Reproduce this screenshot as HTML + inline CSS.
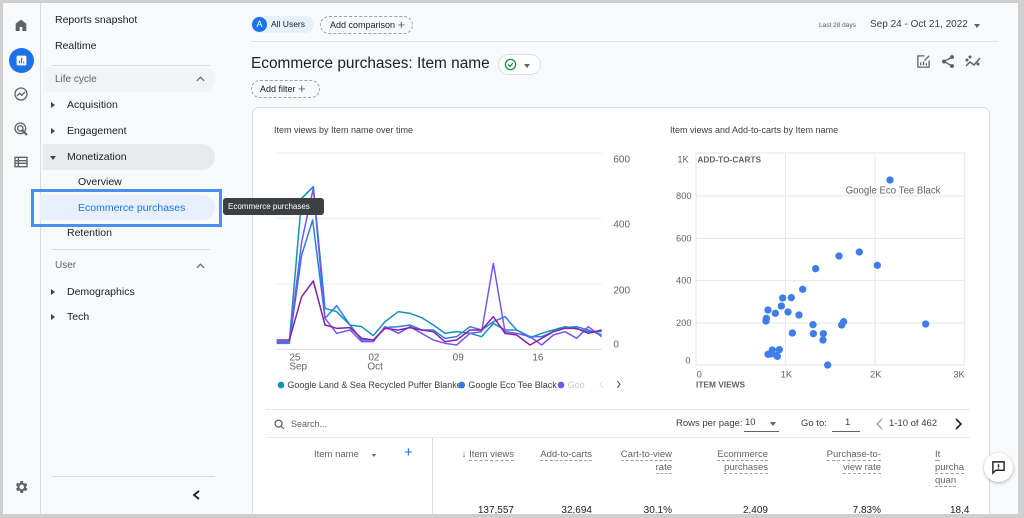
<!DOCTYPE html>
<html><head><meta charset="utf-8"><style>
*{box-sizing:border-box;margin:0;padding:0}
body{width:1024px;height:518px;overflow:hidden;background:#cfcfcf;font-family:"Liberation Sans",sans-serif;color:#202124;position:relative}
.abs{position:absolute}
#frame{position:absolute;left:3px;top:3px;width:1015px;height:511px;background:#f8f9fa;overflow:hidden}
.t{position:absolute;white-space:nowrap}
.nav{font-size:10.5px;color:#202124}
.sec{font-size:10px;color:#5f6368}
.tri{position:absolute;width:0;height:0;border-top:3px solid transparent;border-bottom:3px solid transparent;border-left:4px solid #444}
.pill{position:absolute;border:1px dashed #9aa0a6;border-radius:12px;font-size:9px;color:#202124;background:#f8f9fa}
.hd{position:absolute;font-size:9.5px;color:#5f6368;text-align:right;line-height:13px}
.hd span{border-bottom:1px dashed #9aa0a6}
.v{position:absolute;font-size:10px;color:#202124;text-align:right}
</style></head><body>
<div id="frame">
<div class="abs" style="left:37px;top:0;width:1px;height:511px;background:#dadce0"></div>
<svg class="abs" style="left:10px;top:14px" width="16" height="16" viewBox="0 0 24 24"><path d="M4 21V10l8-6 8 6v11h-6v-6h-4v6z" fill="#5f6368"/></svg>
<div class="abs" style="left:6px;top:45px;width:25px;height:25px;border-radius:50%;background:#1a73e8"></div>
<svg class="abs" style="left:12px;top:51px" width="13" height="13" viewBox="0 0 24 24"><rect x="3" y="3" width="18" height="18" rx="2" fill="#fff"/><path d="M8 17v-5M12 17V7M16 17v-3" stroke="#1a73e8" stroke-width="2.2"/></svg>
<svg class="abs" style="left:10px;top:83px" width="16" height="16" viewBox="0 0 24 24" fill="none" stroke="#5f6368" stroke-width="2"><circle cx="12" cy="12" r="9"/><path d="M6 15l4-4 3 3 5-5"/></svg>
<svg class="abs" style="left:10px;top:118px" width="16" height="16" viewBox="0 0 24 24" fill="none" stroke="#5f6368" stroke-width="2"><circle cx="11" cy="11" r="8"/><circle cx="11" cy="11" r="4"/><path d="M13 13l8 8" stroke-width="3"/></svg>
<svg class="abs" style="left:10px;top:151px" width="16" height="16" viewBox="0 0 24 24"><path d="M3 5h18v14H3z" fill="none" stroke="#5f6368" stroke-width="2"/><path d="M3 10h18M3 14h18M8 5v14" stroke="#5f6368" stroke-width="2"/></svg>
<svg class="abs" style="left:10px;top:476px" width="16" height="16" viewBox="0 0 24 24" fill="#5f6368"><path d="M19.4 13a7.5 7.5 0 000-2l2.1-1.6-2-3.5-2.5 1a7 7 0 00-1.7-1L15 3h-4l-.4 2.8a7 7 0 00-1.7 1l-2.5-1-2 3.5L6.6 11a7.5 7.5 0 000 2l-2.1 1.6 2 3.5 2.5-1a7 7 0 001.7 1L11 21h4l.4-2.8a7 7 0 001.7-1l2.5 1 2-3.5zM13 15.5a3.5 3.5 0 110-7 3.5 3.5 0 010 7z"/></svg>
<div class="t nav" style="left:52px;top:11px">Reports snapshot</div>
<div class="t nav" style="left:52px;top:37px">Realtime</div>
<div class="abs" style="left:49px;top:62px;width:158px;height:1px;background:#dadce0"></div>
<div class="abs" style="left:40px;top:64px;width:172px;height:25px;background:#f1f3f4;border-radius:0 13px 13px 0"></div>
<div class="t sec" style="left:52px;top:71px">Life cycle</div>
<svg class="abs" style="left:193px;top:73px" width="9" height="6" viewBox="0 0 10 6"><path d="M1 5l4-4 4 4" stroke="#5f6368" fill="none" stroke-width="1.3"/></svg>
<div class="tri" style="left:48px;top:99px"></div><div class="t nav" style="left:64px;top:96px">Acquisition</div>
<div class="tri" style="left:48px;top:125px"></div><div class="t nav" style="left:64px;top:122px">Engagement</div>
<div class="abs" style="left:40px;top:141px;width:172px;height:26px;background:#e8eaed;border-radius:0 13px 13px 0"></div>
<div class="abs" style="left:47px;top:153px;width:0;height:0;border-left:3px solid transparent;border-right:3px solid transparent;border-top:4px solid #444"></div>
<div class="t nav" style="left:64px;top:148px">Monetization</div>
<div class="t nav" style="left:75px;top:173px">Overview</div>
<div class="abs" style="left:28px;top:186px;width:191px;height:38px;border:3px solid #4a90f0"></div>
<div class="abs" style="left:37px;top:192px;width:175px;height:25px;background:#e8f0fe;border-radius:0 13px 13px 0"></div>
<div class="t nav" style="left:75px;top:199px;color:#1a73e8">Ecommerce purchases</div>
<div class="t nav" style="left:64px;top:224px">Retention</div>
<div class="abs" style="left:49px;top:246px;width:158px;height:1px;background:#dadce0"></div>
<div class="t sec" style="left:52px;top:257px">User</div>
<svg class="abs" style="left:193px;top:260px" width="9" height="6" viewBox="0 0 10 6"><path d="M1 5l4-4 4 4" stroke="#5f6368" fill="none" stroke-width="1.3"/></svg>
<div class="tri" style="left:48px;top:286px"></div><div class="t nav" style="left:64px;top:283px">Demographics</div>
<div class="tri" style="left:48px;top:311px"></div><div class="t nav" style="left:64px;top:308px">Tech</div>
<div class="abs" style="left:49px;top:473px;width:163px;height:1px;background:#dadce0"></div>
<svg class="abs" style="left:189px;top:487px" width="9" height="10" viewBox="0 0 9 10"><path d="M7 1L2 5l5 4" stroke="#202124" fill="none" stroke-width="1.8"/></svg>
<div class="abs" style="left:248px;top:13px;width:63px;height:17px;background:#e8f0fe;border-radius:9px"></div>
<div class="abs" style="left:249px;top:14px;width:15px;height:15px;border-radius:50%;background:#1a73e8;color:#fff;font-size:9px;text-align:center;line-height:15px">A</div>
<div class="t" style="left:268px;top:16px;font-size:8.5px">All Users</div>
<div class="pill" style="left:317px;top:13px;width:93px;height:18px;line-height:16px;padding-left:9px">Add comparison <span style="font-size:13px;vertical-align:-1px;color:#5f6368">+</span></div>
<div class="t" style="left:816px;top:19px;font-size:6.5px;color:#5f6368;background:#f1f3f4">Last 28 days</div>
<div class="t" style="left:867px;top:16px;font-size:10px;color:#3c4043">Sep 24 - Oct 21, 2022</div>
<div class="abs" style="left:971px;top:21px;border-left:3px solid transparent;border-right:3px solid transparent;border-top:4px solid #5f6368"></div>
<div class="abs" style="left:248px;top:38px;width:747px;height:1px;background:#e0e0e0"></div>
<div class="t" style="left:248px;top:52px;font-size:15.4px;color:#202124">Ecommerce purchases: Item name</div>
<div class="abs" style="left:495px;top:51px;width:43px;height:21px;border:1px solid #dadce0;border-radius:11px;background:#fff"></div>
<svg class="abs" style="left:501px;top:55px" width="13" height="13" viewBox="0 0 14 14"><circle cx="7" cy="7" r="5.5" fill="none" stroke="#1e8e3e" stroke-width="1.4"/><path d="M4.5 7l2 2 3-3.5" stroke="#1e8e3e" fill="none" stroke-width="1.4"/></svg>
<div class="abs" style="left:521px;top:61px;border-left:3px solid transparent;border-right:3px solid transparent;border-top:4px solid #5f6368"></div>
<div class="pill" style="left:248px;top:77px;width:69px;height:18px;line-height:16px;padding-left:8px">Add filter <span style="font-size:13px;vertical-align:-1px;color:#5f6368">+</span></div>
<svg class="abs" style="left:913px;top:51px" width="15" height="15" viewBox="0 0 16 16" fill="none" stroke="#5f6368" stroke-width="1.4"><path d="M9 2H2v12h12V7"/><path d="M5 12V9M8 12V8M11 12v-2"/><path d="M9 7l5-5"/></svg>
<svg class="abs" style="left:938px;top:51px" width="14" height="15" viewBox="0 0 14 15" fill="#5f6368"><circle cx="11" cy="3" r="2"/><circle cx="3" cy="7.5" r="2"/><circle cx="11" cy="12" r="2"/><path d="M11 3L3 7.5 11 12" stroke="#5f6368" stroke-width="1.3" fill="none"/></svg>
<svg class="abs" style="left:962px;top:52px" width="17" height="13" viewBox="0 0 17 13" fill="none" stroke="#5f6368" stroke-width="1.5"><path d="M1 11l4-4 4 3 6-7"/><circle cx="5" cy="2" r=".8" fill="#5f6368"/><circle cx="13" cy="9" r=".8" fill="#5f6368"/><circle cx="2" cy="5" r=".8" fill="#5f6368"/></svg>
<div class="abs" style="left:249px;top:104px;width:738px;height:420px;background:#fff;border:1px solid #dadce0;border-radius:7px"></div>
<div class="t" style="left:271px;top:122px;font-size:9px;color:#3c4043">Item views by Item name over time</div>
<div class="t" style="left:667px;top:122px;font-size:9px;color:#3c4043">Item views and Add-to-carts by Item name</div>
</div>
<svg class="abs" style="left:270px;top:145px" width="370" height="255" viewBox="0 0 1110 765">
<g stroke="#eeeeee" stroke-width="3"><path d="M20 24H995M20 220H995M20 417H995"/></g>
<path d="M20 613H995" stroke="#dadce0" stroke-width="3"/>
<g font-size="30" fill="#5f6368" font-family="Liberation Sans"><text x="1030" y="52">600</text><text x="1030" y="248">400</text><text x="1030" y="445">200</text><text x="1030" y="607">0</text>
<text x="58" y="646">25</text><text x="58" y="673">Sep</text><text x="295" y="646">02</text><text x="292" y="673">Oct</text><text x="548" y="646">09</text><text x="787" y="646">16</text></g>
<g fill="none" stroke-width="4.5" stroke-linejoin="round">
<polyline stroke="#1590b8" points="20,590 58,590 95,160 130,125 165,490 200,500 240,540 275,545 310,572 345,530 385,500 420,505 455,518 490,540 525,565 560,560 600,565 635,575 670,535 705,555 740,555 780,578 815,565 850,555 885,545 920,552 955,560 995,560"/>
<polyline stroke="#2b7de9" points="20,595 58,595 95,330 128,225 165,520 200,482 240,540 275,585 310,585 345,548 385,545 420,540 455,555 490,555 525,580 560,575 600,545 635,555 670,530 705,515 740,555 780,575 815,575 850,560 885,548 920,545 955,555 995,570"/>
<polyline stroke="#7557ee" points="20,592 58,592 95,290 130,130 165,520 200,565 240,555 275,590 310,590 345,545 385,565 420,545 455,565 490,585 525,595 560,600 600,565 635,560 670,355 705,560 740,565 780,575 815,600 850,570 885,560 920,580 955,545 995,575"/>
<polyline stroke="#8a1fa6" points="20,585 58,585 95,455 130,408 165,540 200,550 240,548 275,580 310,585 345,550 385,555 420,548 455,555 490,560 525,590 560,585 600,555 635,555 670,515 705,565 740,570 780,600 815,580 850,560 885,550 920,550 955,565 995,555"/>
</g>
<g font-size="27" font-family="Liberation Sans" fill="#3c4043"><circle cx="33" cy="720" r="10" fill="#1590b8"/><text x="52" y="729">Google Land &amp; Sea Recycled Puffer Blanket</text>
<circle cx="575" cy="720" r="10" fill="#2b7de9"/><text x="595" y="729">Google Eco Tee Black</text>
<circle cx="873" cy="720" r="10" fill="#7557ee"/><text x="893" y="729" fill="#c8c8d0">Goo</text>
<path d="M998 708l-8 10 8 10" stroke="#dadce0" stroke-width="3" fill="none"/><path d="M1042 708l8 10-8 10" stroke="#3c4043" stroke-width="3" fill="none"/></g>
</svg>
<svg class="abs" style="left:660px;top:145px" width="330" height="255" viewBox="0 0 990 765">
<rect x="108" y="24" width="805" height="636" fill="none" stroke="#e6e6e6" stroke-width="3"/>
<g stroke="#e6e6e6" stroke-width="3"><path d="M376 24V660M645 24V660M108 153H913M108 280H913M108 407H913M108 534H913"/></g>
<g font-size="28" fill="#5f6368" font-family="Liberation Sans"><text x="52" y="52">1K</text><text x="48" y="162">800</text><text x="48" y="289">600</text><text x="48" y="416">400</text><text x="48" y="543">200</text><text x="76" y="655">0</text>
<text x="110" y="698">0</text><text x="362" y="698">1K</text><text x="630" y="698">2K</text><text x="880" y="698">3K</text>
<text x="112" y="52" font-weight="bold" font-size="25">ADD-TO-CARTS</text><text x="108" y="727" font-weight="bold" font-size="25">ITEM VIEWS</text>
<text x="557" y="146" font-size="29">Google Eco Tee Black</text></g>
<g fill="#3f7ee8">
<circle cx="690" cy="105" r="11"/><circle cx="537" cy="333" r="11"/><circle cx="598" cy="321" r="11"/><circle cx="652" cy="361" r="11"/><circle cx="467" cy="371" r="11"/><circle cx="428" cy="433" r="11"/><circle cx="368" cy="459" r="11"/><circle cx="394" cy="458" r="11"/><circle cx="364" cy="483" r="11"/><circle cx="324" cy="495" r="11"/><circle cx="346" cy="505" r="11"/><circle cx="384" cy="501" r="11"/><circle cx="417" cy="510" r="11"/><circle cx="319" cy="520" r="11"/><circle cx="318" cy="528" r="11"/><circle cx="459" cy="539" r="11"/><circle cx="551" cy="530" r="11"/><circle cx="545" cy="540" r="11"/><circle cx="797" cy="537" r="11"/><circle cx="397" cy="564" r="11"/><circle cx="460" cy="566" r="11"/><circle cx="490" cy="566" r="11"/><circle cx="489" cy="585" r="11"/><circle cx="337" cy="615" r="11"/><circle cx="358" cy="614" r="11"/><circle cx="324" cy="628" r="11"/><circle cx="331" cy="627" r="11"/><circle cx="350" cy="632" r="11"/><circle cx="352" cy="634" r="11"/><circle cx="503" cy="660" r="11"/></g>
</svg>
<div class="abs" style="left:266px;top:409px;width:704px;height:1px;background:#e8eaed"></div>
<svg class="abs" style="left:274px;top:419px" width="11" height="11" viewBox="0 0 12 12" fill="none" stroke="#5f6368" stroke-width="1.4"><circle cx="5" cy="5" r="3.8"/><path d="M8 8l3 3"/></svg>
<div class="t" style="left:291px;top:419px;font-size:9px;color:#5f6368">Search...</div>
<div class="t" style="left:676px;top:418px;font-size:9.5px;color:#3c4043">Rows per page:</div>
<div class="t" style="left:745px;top:417px;font-size:9.5px;color:#3c4043">10</div>
<div class="abs" style="left:770px;top:422px;border-left:3px solid transparent;border-right:3px solid transparent;border-top:4px solid #5f6368"></div>
<div class="abs" style="left:744px;top:431px;width:35px;height:1px;background:#5f6368"></div>
<div class="t" style="left:801px;top:418px;font-size:9.5px;color:#3c4043">Go to:</div>
<div class="t" style="left:845px;top:417px;font-size:9.5px;color:#3c4043">1</div>
<div class="abs" style="left:832px;top:431px;width:28px;height:1px;background:#5f6368"></div>
<svg class="abs" style="left:876px;top:418px" width="8" height="12" viewBox="0 0 8 12"><path d="M6 1L1 6l5 5" stroke="#9aa0a6" fill="none" stroke-width="1.3"/></svg>
<div class="t" style="left:889px;top:418px;font-size:9.5px;color:#3c4043">1-10 of 462</div>
<svg class="abs" style="left:954px;top:418px" width="8" height="12" viewBox="0 0 8 12"><path d="M2 1l5 5-5 5" stroke="#202124" fill="none" stroke-width="1.6"/></svg>
<div class="abs" style="left:266px;top:437px;width:704px;height:1px;background:#e8eaed"></div>
<div class="abs" style="left:432px;top:438px;width:1px;height:80px;background:#dadce0"></div>
<div class="t" style="left:314px;top:449px;font-size:9.5px;color:#5f6368">Item name</div>
<div class="abs" style="left:372px;top:454px;border-left:2.5px solid transparent;border-right:2.5px solid transparent;border-top:3px solid #5f6368"></div>
<div class="t" style="left:404px;top:444px;font-size:15px;color:#1a73e8">+</div>
<div class="hd" style="left:440px;top:448px;width:74px">↓ <span>Item views</span></div>
<div class="hd" style="left:520px;top:448px;width:72px"><span>Add-to-carts</span></div>
<div class="hd" style="left:600px;top:448px;width:72px"><span>Cart-to-view</span><br><span>rate</span></div>
<div class="hd" style="left:690px;top:448px;width:78px"><span>Ecommerce</span><br><span>purchases</span></div>
<div class="hd" style="left:800px;top:448px;width:81px"><span>Purchase-to-</span><br><span>view rate</span></div>
<div class="hd" style="left:920px;top:448px;width:47px;overflow:hidden;text-align:left;padding-left:15px"><span>It</span><br><span>purcha</span><br><span>quan</span></div>
<div class="v" style="left:440px;top:505px;width:74px">137,557</div>
<div class="v" style="left:520px;top:505px;width:72px">32,694</div>
<div class="v" style="left:600px;top:505px;width:72px">30.1%</div>
<div class="v" style="left:690px;top:505px;width:78px">2,409</div>
<div class="v" style="left:800px;top:505px;width:81px">7.83%</div>
<div class="t" style="left:950px;top:505px;font-size:10px">18,4</div>
<div class="abs" style="left:984px;top:453px;width:29px;height:29px;border-radius:50%;background:#fff;box-shadow:0 1px 3px rgba(0,0,0,.3)"></div>
<svg class="abs" style="left:991px;top:460px" width="15" height="15" viewBox="0 0 16 16"><path d="M2 2h12v9H5l-3 3z" fill="none" stroke="#202124" stroke-width="1.5"/><path d="M8 4.5v3.5M8 9v1" stroke="#202124" stroke-width="1.5"/></svg>
<div class="abs" style="left:223px;top:198px;width:101px;height:17px;background:#3c4043;border-radius:3px;color:#fff;font-size:8px;line-height:17px;padding-left:5px;white-space:nowrap">Ecommerce purchases</div>
<div class="abs" style="left:0;top:514px;width:1024px;height:4px;background:#cfcfcf"></div>
<div class="abs" style="left:1018px;top:0;width:6px;height:518px;background:#cfcfcf"></div>
</body></html>
